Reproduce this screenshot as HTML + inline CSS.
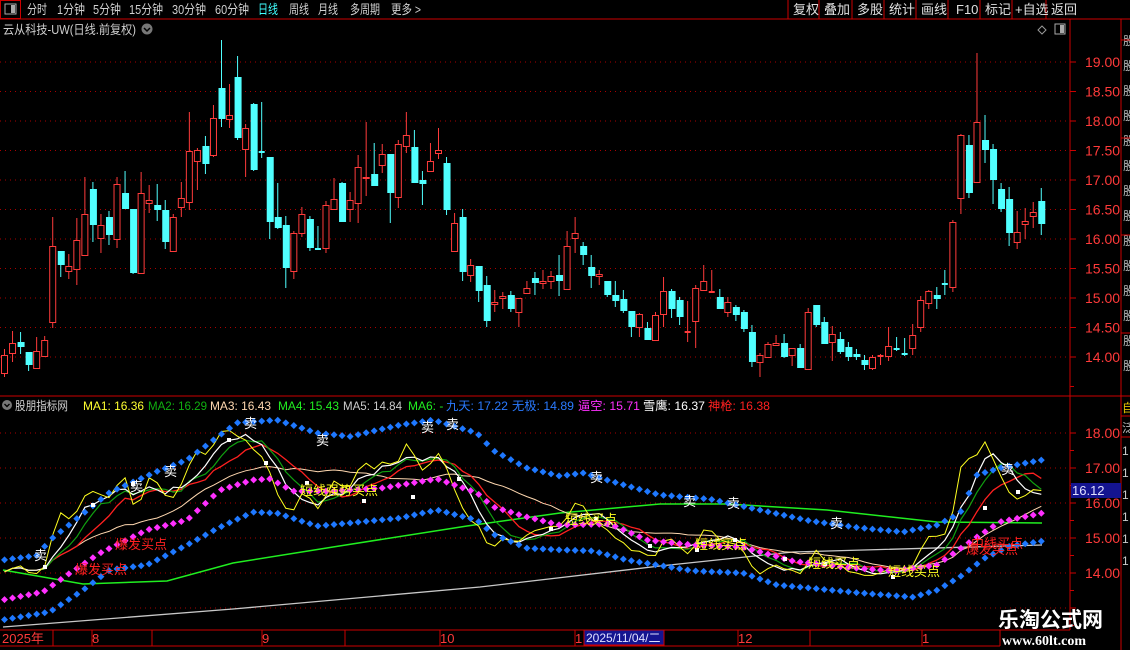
<!DOCTYPE html>
<html><head><meta charset="utf-8">
<style>
html,body{margin:0;padding:0;background:#000;overflow:hidden;width:1130px;height:650px}
svg{display:block;font-family:"Liberation Sans","Noto Sans CJK SC",sans-serif}
</style></head><body>
<svg id="s" width="1130" height="650" viewBox="0 0 1130 650" xmlns="http://www.w3.org/2000/svg">
<rect width="1130" height="650" fill="#000"/>
<g id="g"></g>
</svg>
<script>
var S='';
function L(x1,y1,x2,y2,c,w,d){S+='<line x1="'+x1+'" y1="'+y1+'" x2="'+x2+'" y2="'+y2+'" stroke="'+c+'" stroke-width="'+(w||1)+'"'+(d?' stroke-dasharray="'+d+'"':'')+'/>';}
function R(x,y,w,h,f,st){S+='<rect x="'+x+'" y="'+y+'" width="'+w+'" height="'+h+'" fill="'+(f||'none')+'"'+(st?' stroke="'+st+'"':'')+'/>';}
function T(x,y,t,c,fs,extra){S+='<text x="'+x+'" y="'+y+'" fill="'+c+'" font-size="'+(fs||12)+'" '+(extra||'')+'>'+t+'</text>';}
var RED='#cc0000';
R(0.5,0.5,20,18,'none',RED);
R(5,4,11,10,'none','#aaa');R(11,5,4,8,'#aaa');
L(0,19,1130,19,RED);
var tb=[[27,'分时',20],[57,'1分钟',28],[93,'5分钟',28],[129,'15分钟',34],[172,'30分钟',34],[215,'60分钟',34],[258,'日线',20],[289,'周线',20],[318,'月线',20],[350,'多周期',30],[391,'更多 &gt;',30]];
tb.forEach(function(a){T(a[0],14,a[1],a[1]=='日线'?'#40ffff':'#d0d0d0',13,'textLength="'+a[2]+'" lengthAdjust="spacingAndGlyphs"');});
var sep=[788,819,852,884,916,948,980,1012,1046];
sep.forEach(function(x){L(x,0,x,19,RED);});
var bt=[[793,'复权'],[824,'叠加'],[857,'多股'],[889,'统计'],[921,'画线'],[956,'F10'],[985,'标记'],[1015,'+自选'],[1051,'返回']];
bt.forEach(function(a){T(a[0],14,a[1],'#e0e0e0',13);});
T(3,34,'云从科技-UW(日线.前复权)','#cfcfcf',12.5,'textLength="133" lengthAdjust="spacingAndGlyphs"');
S+='<circle cx="147" cy="29" r="5.5" fill="#777"/><path d="M144,28 l3,3 l3,-3" stroke="#000" stroke-width="1.5" fill="none"/>';
S+='<path d="M1042,26 l4,4 l-4,4 l-4,-4z" fill="none" stroke="#999"/>';
R(1055,24,10,10,'none','#aaa');R(1060,25,4,8,'#aaa');
L(1070,19,1070,630,RED);L(1121,19,1121,650,RED);
L(0,396,1130,396,RED);L(0,630,1070,630,RED);L(0,646,1000,646,RED);
for(var k=0;k<14;k++){T(1123,45+k*25,'股','#bbb',12);}
L(1121,40,1130,40,RED);L(1121,138,1130,138,RED);L(1121,235,1130,235,RED);L(1121,333,1130,333,RED);
T(1122,412,'自','#e0c000',12);L(1121,416,1130,416,RED);T(1122,432,'泛','#bbb',12);L(1121,437,1130,437,RED);
for(var k=0;k<6;k++)T(1122,455+k*22,'1','#ccc',12);
var prices=[19,18.5,18,17.5,17,16.5,16,15.5,15,14.5,14];
function yP(p){return 62+(19-p)*59;}
prices.forEach(function(p){var y=yP(p);L(0,y,1068,y,'#aa0000',1,'1 4');L(1070,y,1076,y,RED);T(1085,y+5,p.toFixed(2),'#ff3a3a',14);
 L(1070,y+29.5,1074,y+29.5,RED);});
function yI(p){return 433+(18-p)*35;}
[18,17,16,15,14,13].forEach(function(p){var y=yI(p);L(0,y,1068,y,'#aa0000',1,'1 4');L(1070,y,1076,y,RED);if(p>13.5)T(1085,y+5,p.toFixed(2),'#ff3a3a',14);L(1070,y+17.5,1074,y+17.5,RED);});
var C=[[355,374,349,377,1],[343,354,331,362,1],[342,347,332,354,0],[352,365,352,371,0],[351,369,337,369,1],[340,357,336,357,1],[246,323,217,328,1],[251,265,251,277,0],[266,272,254,279,1],[240,270,218,285,1],[214,256,177,256,1],[189,225,182,242,0],[225,239,214,253,1],[217,235,211,245,0],[184,240,177,248,1],[193,209,171,209,0],[209,273,209,274,0],[193,274,172,274,1],[200,204,185,213,1],[205,210,184,221,0],[210,242,200,249,0],[217,252,214,252,1],[198,208,182,217,1],[151,203,112,210,1],[150,162,148,190,1],[146,164,136,174,0],[118,156,105,157,1],[88,119,40,127,0],[115,120,84,128,1],[77,138,56,140,0],[128,150,124,177,1],[104,170,103,171,0],[152,152,102,158,0],[157,222,157,239,0],[217,228,183,229,0],[225,268,216,288,0],[233,272,231,279,1],[214,234,207,237,1],[219,248,216,251,0],[249,249,226,249,0],[205,249,201,253,1],[199,210,178,210,1],[183,222,182,222,0],[200,210,192,222,1],[167,204,155,223,1],[177,179,122,196,1],[174,186,143,186,0],[154,166,144,173,1],[154,193,154,223,0],[144,198,140,208,1],[135,147,112,153,1],[147,183,130,183,0],[180,184,171,205,0],[161,172,143,172,1],[150,154,128,159,1],[163,210,157,215,0],[223,252,213,252,1],[217,272,209,281,0],[265,276,259,282,1],[266,291,266,302,0],
[285,321,276,327,0],[302,305,290,312,1],[296,299,292,309,1],[295,309,291,312,0],[298,313,298,327,1],[288,294,281,294,1],[278,283,272,295,0],[281,284,270,289,1],[276,282,271,289,1],[275,281,255,296,0],[246,290,231,290,1],[233,239,217,253,1],[246,255,242,265,0],[267,276,255,288,0],[274,277,270,285,1],[281,295,281,297,0],[295,301,281,307,0],[299,311,290,313,0],[311,327,311,337,0],[314,328,313,337,1],[328,340,322,340,0],[315,341,312,341,1],[291,315,277,327,1],[291,309,289,318,0],[300,317,297,325,0],[332,332,301,342,1],[288,322,285,348,1],[281,291,265,291,1],[292,292,270,293,1],[297,309,289,309,0],[302,313,297,317,1],[307,315,305,321,0],[312,329,310,332,0],[332,362,325,367,0],[355,363,353,377,1],[344,358,342,358,1],[343,346,335,346,1],[343,357,334,358,0],[348,356,348,366,1],[348,368,344,368,0],[312,370,308,370,1],[305,325,305,327,0],[322,344,317,344,0],[334,343,326,361,1],[339,352,332,354,0],[347,357,342,361,0],[354,357,349,360,0],[360,365,355,370,0],[357,369,355,370,1],[356,356,354,365,1],[346,357,327,361,1],[349,349,337,351,0],[354,354,338,356,0],[335,349,324,355,1],
[300,328,296,332,1],[291,304,290,309,1],[295,299,287,309,0],[284,284,270,295,0],[222,288,220,292,1],[135,199,134,214,1],[145,193,135,198,0],[122,183,53,183,1],[140,150,115,163,0],[149,180,144,204,0],[189,209,183,212,0],[199,233,187,246,0],[232,243,211,249,1],[221,225,208,239,1],[212,217,202,228,1],[201,224,188,235,0]];
var SP=8.037;
function cx(i){return 4.5+SP*i;}
var closes=[];
C.forEach(function(c,i){var x=cx(i);var col=c[4]?'#ff3b3b':'#50ffff';
 L(x,c[2],x,c[3],col);
 var h=Math.max(c[1]-c[0],1);
 if(c[4]){ if(c[1]-c[0]<1.5) L(x-3,c[0],x+3,c[0],col,2); else R(x-3,c[0]+0.5,6,h-1,'#000',col);}
 else { if(c[1]-c[0]<1.5) L(x-3,c[0],x+3,c[0],col,2); else R(x-3,c[0],7,h,col);}
 var cy=c[4]?c[0]:c[1];closes.push(19-(cy-62)/59);
});
function interp(pts){var out=[];for(var i=0;i<C.length;i++){var x=cx(i);var v;
 if(x<=pts[0][0])v=pts[0][1];else if(x>=pts[pts.length-1][0])v=pts[pts.length-1][1];
 else for(var j=0;j<pts.length-1;j++){if(x>=pts[j][0]&&x<=pts[j+1][0]){var t=(x-pts[j][0])/(pts[j+1][0]-pts[j][0]);v=pts[j][1]+t*(pts[j+1][1]-pts[j][1]);break;}}
 out.push(v);}return out;}
function ma(n){var o=[];for(var i=0;i<closes.length;i++){var s=0,c=0;for(var j=Math.max(0,i-n+1);j<=i;j++){s+=closes[j];c++;}o.push(s/c);}return o;}
function poly(arr,col,w){var p=arr.map(function(v,i){return cx(i).toFixed(1)+','+yI(v).toFixed(1);}).join(' ');S+='<polyline points="'+p+'" fill="none" stroke="'+col+'" stroke-width="'+(w||1)+'"/>';}
function polyY(pts,col,w){var p=pts.map(function(a){return a[0]+','+a[1];}).join(' ');S+='<polyline points="'+p+'" fill="none" stroke="'+col+'" stroke-width="'+(w||1)+'"/>';}
polyY([[3,627],[233,609],[480,587],[660,566],[793,552],[1042,545]],'#c8c8c8',1.3);
polyY([[3,570],[83,584],[167,581],[233,563],[333,547],[467,526],[560,513],[660,504],[727,504],[827,510],[937,522],[1042,523]],'#20ee20',1.5);
poly(ma(20),'#ffd8b0',1);
poly(ma(10),'#ff2020',1.3);
poly(ma(7),'#10a010',1.2);
poly(ma(5),'#ffffff',1.2);
poly(ma(2),'#ffff20',1);
function dots(arr,col){arr.forEach(function(v,i){var x=cx(i),y=yI(v);if(y<398||y>628)return;S+='<path d="M'+x+','+(y-3.5)+' l3.5,3.5 l-3.5,3.5 l-3.5,-3.5z" fill="'+col+'"/>';});}
var up=[[3,14.37],[37,14.5],[50,14.94],[110,16.31],[157,16.9],[187,17.23],[220,17.94],[237,18.29],[277,18.37],[317,18],[350,17.9],[400,18.23],[433,18.37],[477,18],[493,17.5],[527,17.0],[560,16.77],[583,16.86],[610,16.63],[660,16.23],[710,16.11],[760,15.8],[810,15.49],[860,15.29],[903,15.17],[937,15.37],[960,15.7],[977,16.8],[1000,17.0],[1042,17.23]];
var mg=[[3,13.23],[43,13.46],[67,13.94],[100,14.57],[147,15.23],[187,15.51],[220,16.37],[253,16.66],[270,16.69],[293,16.34],[333,16.34],[383,16.43],[437,16.69],[477,16.29],[493,15.89],[527,15.6],[560,15.37],[610,15.4],[647,14.94],[693,14.8],[743,14.74],[793,14.34],[843,14.17],[893,14.06],[937,14.23],[977,15.03],[1000,15.46],[1042,15.71]];
var lo=[[3,12.66],[50,12.89],[83,13.51],[110,14.09],[147,14.23],[187,14.8],[220,15.31],[253,15.74],[277,15.71],[317,15.34],[350,15.43],[400,15.57],[437,15.8],[477,15.51],[493,15.11],[527,14.71],[560,14.66],[593,14.63],[627,14.37],[693,14.06],[743,14.0],[777,13.66],[810,13.57],[860,13.43],[913,13.31],[937,13.51],[960,13.89],[985,14.43],[1010,14.77],[1042,14.91]];
dots(interp(lo),'#1e78ff');dots(interp(mg),'#ff30ff');dots(interp(up),'#1e78ff');
[[45,567],[93,505],[133,484],[229,440],[266,463],[307,483],[364,501],[413,497],[459,479],[551,529],[596,519],[650,546],[697,550],[735,540],[785,559],[825,564],[893,577],[985,508],[1018,492]].forEach(function(a){R(a[0]-2,a[1]-2,4,4,'#fff');});
var sell=[[40,555],[136,486],[170,471],[250,423],[322,440],[427,427],[452,424],[596,477],[689,501],[733,503],[836,523],[1007,469]];
sell.forEach(function(a){T(a[0]-6,a[1]+5,'卖','#fff',13);});
T(300,495,'短线强势买点','#ffff20',13);T(565,524,'短线买点','#ffff20',13);T(695,549,'短线买点','#ffff20',13);T(808,568,'短线买点','#ffff20',13);T(888,576,'短线买点','#ffff20',13);
T(115,549,'爆发买点','#ff2020',13);T(75,574,'爆发买点','#ff2020',13);T(966,554,'爆发买点','#ff2020',13);T(971,548,'中线买点','#ff2020',13);
S+='<circle cx="7" cy="405" r="5" fill="#777"/><path d="M4.5,404 l2.5,2.5 l2.5,-2.5" stroke="#000" stroke-width="1.4" fill="none"/>';
var lg=[[15,'股朋指标网','#cfcfcf',53],[83,'MA1: 16.36','#ffff30',61],[148,'MA2: 16.29','#10b010',59],[210,'MA3: 16.43','#ffd8b0',61],[278,'MA4: 15.43','#20ee20',61],[343,'MA5: 14.84','#cccccc',59],[408,'MA6: -','#20ee20',0],[446,'九天: 17.22','#2a7aff',62],[512,'无极: 14.89','#2a7aff',62],[578,'逼空: 15.71','#ff30ff',62],[643,'雪鹰: 16.37','#ffffff',62],[708,'神枪: 16.38','#ff2020',62]];
lg.forEach(function(a){T(a[0],410,a[1],a[2],12,a[3]?'textLength="'+a[3]+'" lengthAdjust="spacingAndGlyphs"':'');});
R(1071,483,50,15,'#141490');T(1072,495,'16.12','#e0e0ff',13);
[[2,'2025年'],[92,'8'],[262,'9'],[440,'10'],[575,'1']].forEach(function(a){T(a[0],643,a[1],'#ff3a3a',13);});
[[738,'12'],[922,'1']].forEach(function(a){T(a[0],643,a[1],'#ff3a3a',13);});
[53,92,152,262,345,440,575,660,738,810,922,1000].forEach(function(x){L(x,630,x,646,RED);});
R(584,630,80,15,'#141490',RED);T(586,642,'2025/11/04/二','#e0e0ff',12);
T(998,627,'乐淘公式网','#ffffff',21,'font-weight="bold" font-family="Noto Sans CJK SC,sans-serif"');
T(1002,645,'www.60lt.com','#ffffff',14,'font-weight="bold" font-family="Liberation Serif,serif"');
document.getElementById('g').innerHTML=S;
</script>
</body></html>
